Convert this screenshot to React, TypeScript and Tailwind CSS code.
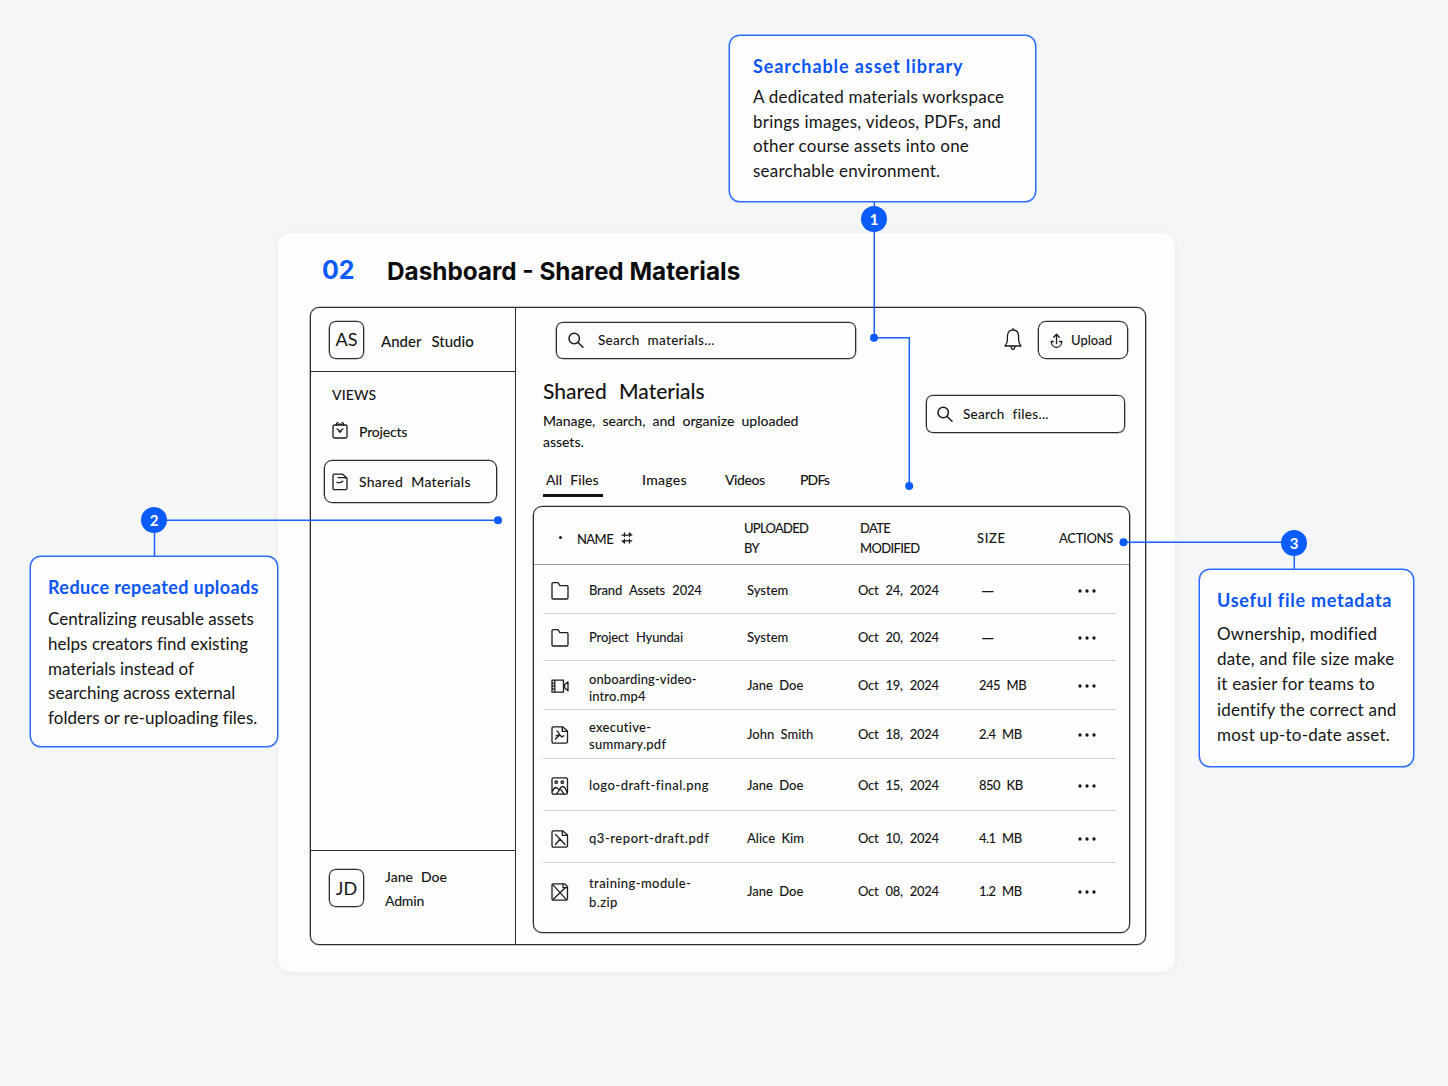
import type { ReactNode } from 'react';

type IconName = 'folder' | 'video' | 'pdf' | 'image' | 'report' | 'archive';

interface FileRow {
  icon: IconName;
  name: string[];
  owner: string;
  date: string;
  size: string;
  row: string;
  nameClass: string;
}

const FILES: FileRow[] = [
  { icon: 'folder', name: ['Brand Assets 2024'], owner: 'System', date: 'Oct 24, 2024', size: '—', row: 'h-[49px] pt-[3px]', nameClass: 'tracking-[-0.2px]' },
  { icon: 'folder', name: ['Project Hyundai'], owner: 'System', date: 'Oct 20, 2024', size: '—', row: 'h-[47px] pt-[2px]', nameClass: 'tracking-[-0.15px]' },
  { icon: 'video', name: ['onboarding-video-', 'intro.mp4'], owner: 'Jane Doe', date: 'Oct 19, 2024', size: '245 MB', row: 'h-[49px] pt-[2px]', nameClass: 'pt-[3px] leading-[16.5px] tracking-[0.1px]' },
  { icon: 'pdf', name: ['executive-', 'summary.pdf'], owner: 'John Smith', date: 'Oct 18, 2024', size: '2.4 MB', row: 'h-[49px] pt-px', nameClass: 'pt-[2px] leading-[16.5px] tracking-[0.28px]' },
  { icon: 'image', name: ['logo-draft-final.png'], owner: 'Jane Doe', date: 'Oct 15, 2024', size: '850 KB', row: 'h-[52px] pt-[3px]', nameClass: 'tracking-[0.45px]' },
  { icon: 'report', name: ['q3-report-draft.pdf'], owner: 'Alice Kim', date: 'Oct 10, 2024', size: '4.1 MB', row: 'h-[52px] pt-[4px]', nameClass: 'tracking-[0.54px]' },
  { icon: 'archive', name: ['training-module-', 'b.zip'], owner: 'Jane Doe', date: 'Oct 08, 2024', size: '1.2 MB', row: 'h-[57px]', nameClass: 'pt-[2px] leading-[19px] tracking-[0.4px]' },
];

const INK = 'border border-[#2b2b2b] shadow-[0_0_0_0.3px_#2b2b2b]';

export default function App() {
  return (
    <main className="relative h-[1086px] w-[1448px] overflow-hidden bg-[#f5f6f8] pl-[278px] pt-[233px] font-['Lato',sans-serif] text-[#141414]">
      <section className="h-[739px] w-[897px] rounded-[14px] bg-[#fdfdfd] px-8 shadow-[0_1px_8px_rgba(20,30,60,0.05)]">
        <header className="flex h-[74px] items-center pl-3 pt-[2px] font-['Inter',sans-serif] font-bold">
          <span className="w-[65px] text-[25px] text-[#0b5cff]">02</span>
          <h1 className="text-[24.3px] text-[#0c0c0c]">Dashboard - Shared Materials</h1>
        </header>
        <div className={`flex h-[638px] w-[836px] rounded-[9px] ${INK}`}>
          <Sidebar />
          <Workspace />
        </div>
      </section>

      <Connectors />
      <Callout
        className="left-[729px] top-[35px] h-[167px] w-[307px] pl-[23px] pt-[18px]"
        title="Searchable asset library"
        titleClass="tracking-[0.92px]"
        bodyClass="mt-[7px] leading-[24.7px] tracking-[0.23px]"
      >
        A dedicated materials workspace<br />brings images, videos, PDFs, and<br />other course assets into one<br />searchable environment.
      </Callout>
      <Callout
        className="left-[30px] top-[556px] h-[191px] w-[248px] pl-[17px] pt-[18px]"
        title="Reduce repeated uploads"
        titleClass="tracking-[0.4px]"
        bodyClass="mt-[8px] leading-[24.8px] tracking-[0.03px]"
      >
        Centralizing reusable assets<br />helps creators find existing<br />materials instead of<br />searching across external<br />folders or re-uploading files.
      </Callout>
      <Callout
        className="left-[1199px] top-[569px] h-[198px] w-[215px] pl-[17px] pt-[18px]"
        title="Useful file metadata"
        titleClass="tracking-[0.72px]"
        bodyClass="mt-[9px] leading-[25.2px] tracking-[0.22px]"
      >
        Ownership, modified<br />date, and file size make<br />it easier for teams to<br />identify the correct and<br />most up-to-date asset.
      </Callout>
      <Badge className="left-[861px] top-[206px]">1</Badge>
      <Badge className="left-[141px] top-[507px]">2</Badge>
      <Badge className="left-[1281px] top-[530px]">3</Badge>
    </main>
  );
}

function Sidebar() {
  return (
    <aside className="flex w-[205px] shrink-0 flex-col border-r border-[#2b2b2b] font-medium">
      <div className="flex h-[64px] items-center border-b border-[#2b2b2b] pl-[18px]">
        <Initials>AS</Initials>
        <span className="ml-[17px] mt-1 text-[15px] [word-spacing:6.5px]">Ander Studio</span>
      </div>
      <nav className="flex grow flex-col pl-[13px] pt-[13px] text-[14px]">
        <p className="pl-2 leading-5 tracking-[0.1px]">VIEWS</p>
        <a className="mt-[11px] flex h-[30px] items-center gap-[11px] pl-2">
          <ProjectIcon />
          <span className="tracking-[-0.2px]">Projects</span>
        </a>
        <a className={`mt-[14px] flex h-[43px] w-[173px] items-center gap-[11px] rounded-lg pl-[7px] ${INK}`}>
          <MaterialsIcon />
          <span className="tracking-[0.26px] [word-spacing:4.5px]">Shared Materials</span>
        </a>
      </nav>
      <div className="flex h-[94px] border-t border-[#2b2b2b] pl-[18px] pt-[18px]">
        <Initials>JD</Initials>
        <div className="-mt-1 ml-[21px] text-[14px] leading-6">
          <p className="[word-spacing:4.5px]">Jane Doe</p>
          <p className="tracking-[-0.2px]">Admin</p>
        </div>
      </div>
    </aside>
  );
}

function Initials({ children }: { children: ReactNode }) {
  return <div className={`flex h-[38px] w-[35px] items-center justify-center rounded-[7px] text-[18px] font-normal ${INK}`}>{children}</div>;
}

function Workspace() {
  return (
    <div className="flex grow flex-col font-medium">
      <div className="flex h-[64px] items-center pl-10">
        <SearchBox className="h-[37px] w-[300px] gap-[13px] pl-[10px]">Search materials...</SearchBox>
        <BellIcon />
        <button type="button" className={`ml-[15px] flex h-[38px] w-[90px] items-center gap-[7px] rounded-lg pl-[11px] pt-px text-[13px] ${INK}`}>
          <UploadIcon />
          <span>Upload</span>
        </button>
      </div>
      <div className="flex pl-[27px]">
        <div className="w-[383px]">
          <h2 className="mt-[4px] text-[21px] leading-[30px] [word-spacing:7px]">Shared Materials</h2>
          <p className="mt-1 text-[14px] leading-[21px] tracking-[-0.04px] [word-spacing:3.8px]">
            Manage, search, and organize uploaded<br />assets.
          </p>
        </div>
        <SearchBox className="mt-[23px] h-[38px] w-[199px] gap-[9px] pl-[9px]">Search files...</SearchBox>
      </div>
      <div className="mt-[15px] flex h-[30px] pl-[27px] text-[14px] leading-[26px]">
        <span className="w-[60px] border-b-[3px] border-[#141414] pl-[3px] [word-spacing:4.6px]">All Files</span>
        <span className="ml-[39px] w-[83px] tracking-[0.3px]">Images</span>
        <span className="w-[75px] tracking-[-0.45px]">Videos</span>
        <span className="tracking-[-0.85px]">PDFs</span>
      </div>
      <div className={`ml-[17px] mt-[9px] h-[427px] w-[597px] rounded-[9px] text-[13px] ${INK}`}>
        <div className="flex h-[58px] items-center border-b border-[#9a9a9a] pt-[5px] text-[13px] leading-5">
          <span className="mb-[2px] ml-[25px] mr-[15px] size-[3px] rounded-full bg-[#141414]" />
          <span className="w-[44px] pt-px tracking-[-0.6px]">NAME</span>
          <SortIcon />
          <span className="ml-[111px] w-[116px] tracking-[-0.75px]">UPLOADED<br />BY</span>
          <span className="w-[117px] tracking-[-0.65px]">DATE<br />MODIFIED</span>
          <span className="w-[82px] tracking-[0.6px]">SIZE</span>
          <span className="tracking-[-0.3px]">ACTIONS</span>
        </div>
        <div className="pl-[9px] pr-[13px]">
          {FILES.map((file, i) => (
            <div key={file.name[0]} className={`flex items-center pl-2 ${file.row} ${i < FILES.length - 1 ? 'border-b border-[#d2d2d2]' : ''}`}>
              <FileIcon name={file.icon} />
              <span className={`ml-5 w-[158px] [word-spacing:4.2px] ${file.nameClass}`}>
                {file.name.map((line) => <span key={line} className="block">{line}</span>)}
              </span>
              <span className="w-[111px] [word-spacing:3px]">{file.owner}</span>
              <span className="w-[121px] tracking-[-0.28px] [word-spacing:4px]">{file.date}</span>
              {file.size === '—' ? (
                <span className="w-[99px] pl-[2px] text-[17px] font-normal leading-5">—</span>
              ) : (
                <span className="w-[99px] tracking-[-0.5px] [word-spacing:3.6px]">{file.size}</span>
              )}
              <MoreIcon />
            </div>
          ))}
        </div>
      </div>
    </div>
  );
}

function SearchBox({ className, children }: { className: string; children: ReactNode }) {
  return (
    <div className={`flex shrink-0 items-center rounded-[7px] text-[13.5px] tracking-[0.3px] [word-spacing:4.2px] ${INK} ${className}`}>
      <svg width="18" height="17" viewBox="0 0 18 17" fill="none" stroke="#1c1c1c" strokeWidth="1.5" strokeLinecap="round">
        <circle cx="7.2" cy="6.5" r="5.2" />
        <path d="M11 10.5 16 15.3" />
      </svg>
      <span>{children}</span>
    </div>
  );
}

interface CalloutProps {
  className: string;
  title: string;
  titleClass: string;
  bodyClass: string;
  children: ReactNode;
}

function Callout({ className, title, titleClass, bodyClass, children }: CalloutProps) {
  return (
    <article className={`absolute whitespace-nowrap rounded-[11px] border border-[#2e6bff] bg-[#fdfdfe] shadow-[0_0_0_0.5px_#2e6bff] ${className}`}>
      <h3 className={`text-[18px] font-bold leading-6 text-[#0b55f5] ${titleClass}`}>{title}</h3>
      <p className={`text-[17px] ${bodyClass}`}>{children}</p>
    </article>
  );
}

function Badge({ className, children }: { className: string; children: ReactNode }) {
  return (
    <span className={`absolute flex size-[26px] items-center justify-center rounded-full bg-[#0b5cff] text-[15px] font-bold text-white ${className}`}>
      {children}
    </span>
  );
}

// lines from each callout to the spot it describes
function Connectors() {
  return (
    <svg className="absolute left-0 top-0" width="1448" height="1086" fill="none" stroke="#1a62ff" strokeWidth="1.5">
      <path d="M874.3 200V337.7H909.3V486" />
      <path d="M154.5 556V520.2H498" />
      <path d="M1123 542.2H1294.3V570" />
      <g fill="#0b5cff" stroke="none">
        <circle cx="874" cy="337.7" r="4" />
        <circle cx="909.2" cy="486" r="4" />
        <circle cx="498" cy="520.2" r="4" />
        <circle cx="1123.5" cy="542.2" r="4" />
      </g>
    </svg>
  );
}

const STROKE = { fill: 'none', stroke: '#1c1c1c', strokeWidth: 1.3, strokeLinecap: 'round', strokeLinejoin: 'round' } as const;

function MoreIcon() {
  return (
    <svg width="18" height="4" viewBox="0 0 18 4" fill="#141414">
      <circle cx="2" cy="2" r="1.65" />
      <circle cx="9" cy="2" r="1.65" />
      <circle cx="16" cy="2" r="1.65" />
    </svg>
  );
}

function BellIcon() {
  return (
    <svg className="mt-[-3px] ml-[147px]" width="20" height="26" viewBox="0 0 20 26" {...STROKE}>
      <path d="M10 2.4v1.6M2 20c1.5-2 2.4-3.2 2.4-6v-3.6C4.4 6.500 6.400 4 10 4s5.600 2.500 5.600 6.400V14c0 2.800.900 4 2.400 6Z" />
      <path d="M8.200 20.200c-.3 4.200 3.900 4.200 3.600 0" />
    </svg>
  );
}

function UploadIcon() {
  return (
    <svg width="14" height="16" viewBox="0 0 14 16" {...STROKE}>
      <path d="M6.500 10.500V1.300M3.700 4.200 6.500 1.200l2.800 3M3.300 8.500H1.200c.3 7.800 10.300 7.800 10.600 0H9.700" />
    </svg>
  );
}

function SortIcon() {
  return (
    <svg className="shrink-0" width="12" height="12" viewBox="0 0 12 12" {...STROKE}>
      <path d="M3.500 1v3.500M8.500 1v3.500M3.500 7.500V11M8.500 7.500V11M1 3.200h9.800M1 8.800h9.800M8.500 1l1.300 1.300M3.500 11l-1.300-1.300" />
    </svg>
  );
}

function ProjectIcon() {
  return (
    <svg className="mb-[3px]" width="16" height="18" viewBox="0 0 16 18" {...STROKE}>
      <rect x="1" y="4" width="14" height="13" rx="1.5" />
      <path d="M4.500 4V2.600L5.800 1.400M6.500 3.200h3M11.500 4V2.600L10.200 1.400M5 8l1.300.6M11 8l-1.300.6M6.600 9.800 8 11.300l1.500-1.500Z" />
    </svg>
  );
}

function MaterialsIcon() {
  return (
    <svg width="16" height="18" viewBox="0 0 16 18" {...STROKE}>
      <path d="M1 15.200V2.600C1 1.700 1.500 1.200 2.400 1.200h8.300L15 5v10.200c0 1-.6 1.500-1.500 1.500h-11C1.600 16.700 1 16.200 1 15.200Z" />
      <path d="M6 4.600h5.500L13.800 5M5 9.200c1.500 1 2.200.2 3.400.2s1.600-.4 2.400-1.200" />
    </svg>
  );
}

function FileIcon({ name }: { name: IconName }) {
  return (
    <svg className="shrink-0" width="18" height="20" viewBox="0 0 18 20" {...STROKE}>
      {name === 'folder' && <path d="M1 2.800c0-.8.500-1.200 1.200-1.200h4.300c.6 0 .9.300 1.200.8l1 2.200h7.200c.7 0 1.100.4 1.100 1.100v11.100c0 .8-.4 1.200-1.200 1.200H2.200c-.8 0-1.200-.4-1.200-1.200Z" />}
      {name === 'video' && (
        <>
          <path d="M1 4.200h11.500v12H1ZM3.800 4.200v12M1 7.200h1.500M1 10h1.500M1 13h1.500" />
          <path d="m17 5.800-3.400 3v3l3.400 3Z" />
        </>
      )}
      {name === 'image' && (
        <>
          <rect x="1" y="1.800" width="15.500" height="16.400" rx="1.500" />
          <circle cx="5.200" cy="6.200" r="1.200" />
          <circle cx="11.300" cy="6.200" r="1.200" />
          <path d="M1.300 15.500c1-2.500 2.400-4 3.700-4s2.300 1.500 3.200 2.800L5.500 17.800M8.200 14.300c1.200-2.600 2.200-3.800 3.600-3.800 1.700 0 3.200 2.500 4.500 6.500M10 13.800l3 4" />
        </>
      )}
      {(name === 'pdf' || name === 'report') && <path d="M1 16.500v-13c0-1 .6-1.700 1.600-1.700h9L16.500 6v10.500c0 1-.6 1.700-1.600 1.700H2.600c-1 0-1.600-.7-1.600-1.700ZM11.300 2v4.300h5" />}
      {name === 'pdf' && <path d="M6 6c2 1.500 2.800 3.500 1.800 5L4.500 14M5 11c2-1.200 3.500-1.500 4.500-.8l1 1.800 2.300-1.200" />}
      {name === 'report' && <path d="M4.500 5.500 9 10l-4.500 5.500M9 10l5 5.500" />}
      {name === 'archive' && (
        <>
          <path d="M1 16.500v-13c0-1 .6-1.700 1.600-1.700h11L16.500 4.600v11.900c0 1-.6 1.700-1.600 1.700H2.600c-1 0-1.600-.7-1.600-1.700ZM12 2v3.600h4.300" />
          <path d="m1.800 2.600 13.600 15M14.500 5.500 2 17.500" />
        </>
      )}
    </svg>
  );
}
